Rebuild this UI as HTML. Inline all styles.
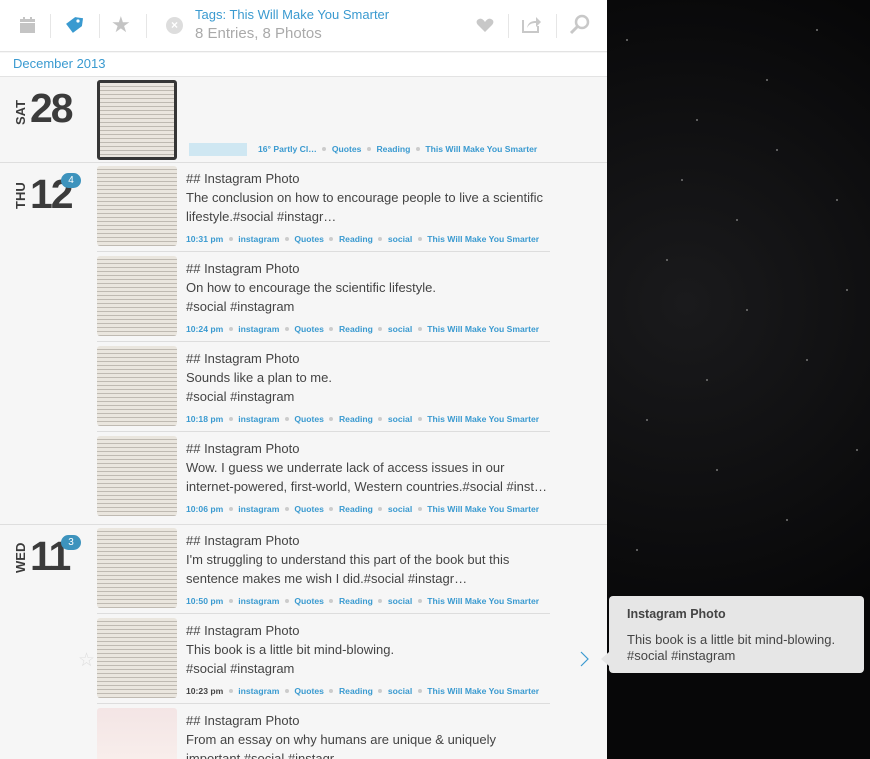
<!DOCTYPE html>
<html><head><meta charset="utf-8"><style>
*{margin:0;padding:0;box-sizing:border-box}
body{width:870px;height:759px;overflow:hidden;font-family:"Liberation Sans",sans-serif;background:#0b0b0d;position:relative}
#left{position:absolute;left:0;top:0;width:607px;height:759px;background:#f6f6f6;overflow:hidden}
#bar{position:absolute;left:0;top:0;width:607px;height:52px;background:#fff;border-bottom:1px solid #e3e3e3}
.sep{position:absolute;top:14px;width:1px;height:24px;background:#e6e6e6}
#mon{position:absolute;top:53px;left:0;width:607px;height:24px;background:#fff;border-bottom:1px solid #e3e3e3;color:#3a9ad0;font-size:13px;padding:3px 13px}
.sec{position:absolute;left:0;width:607px;border-bottom:1px solid #dedede}
.dn{position:absolute;font-size:41px;font-weight:bold;color:#3b3b3b;letter-spacing:-2px}
.dw{position:absolute;font-size:13px;font-weight:bold;color:#3b3b3b;transform:rotate(-90deg);transform-origin:left top}
.badge{position:absolute;width:20px;height:15px;border-radius:8px;background:#3d93bd;color:#fff;font-size:10px;text-align:center;line-height:15px}
.th{position:absolute;left:97px;width:80px;height:80px;border-radius:3px;background:repeating-linear-gradient(#e9e4dc 0 3px,#b9b3aa 3px 4px);opacity:.9}
.e{position:absolute;left:186px;font-size:13px;color:#444;line-height:19px}
.m{position:absolute;left:186px;font-size:8.6px;color:#3a9ad0;font-weight:bold;white-space:nowrap}
.m i{display:inline-block;width:4px;height:4px;border-radius:2px;background:#ccc;margin:0 5.5px 1px;vertical-align:middle;font-style:normal}
.ln{position:absolute;left:97px;width:453px;height:1px;background:#ddd}
</style></head><body>
<div id="left">
<div id="bar">
<svg style="position:absolute;left:20px;top:17px" width="15" height="16"><rect x="0" y="2" width="15" height="14" fill="#c4c4c4"/><rect x="3" y="0" width="2" height="4" fill="#c4c4c4"/><rect x="10" y="0" width="2" height="4" fill="#c4c4c4"/><rect x="0" y="5" width="15" height="1" fill="#fff"/></svg>
<div class="sep" style="left:50px"></div>
<svg style="position:absolute;left:64px;top:15px" width="20" height="20"><path d="M2 10 L10 2 L18 2 L18 10 L10 18 Z" fill="#3a9ad0" transform="rotate(8 10 10)"/><circle cx="14" cy="6" r="1.6" fill="#fff"/></svg>
<div class="sep" style="left:99px"></div>
<div style="position:absolute;left:111px;top:12px;font-size:22px;color:#c4c4c4">★</div>
<div class="sep" style="left:146px"></div>
<div style="position:absolute;left:166px;top:17px;width:17px;height:17px;border-radius:50%;background:#ddd;color:#fff;font-size:12px;text-align:center;line-height:17px;font-weight:bold">×</div>
<div style="position:absolute;left:195px;top:7px;font-size:13px;color:#3a9ad0">Tags: This Will Make You Smarter</div>
<div style="position:absolute;left:195px;top:25px;font-size:15px;color:#aaa">8 Entries, 8 Photos</div>
<svg style="position:absolute;left:476px;top:18px" width="18" height="15"><path d="M9 14 L2 7 C0 5 0 2 3 1 C5 0 7 1 9 4 C11 1 13 0 15 1 C18 2 18 5 16 7 Z" fill="#c8c8c8"/></svg>
<div class="sep" style="left:508px"></div>
<svg style="position:absolute;left:522px;top:15px" width="20" height="18"><path d="M1 5 V17 H16 V11" stroke="#c8c8c8" stroke-width="2" fill="none"/><path d="M5 13 C6 7 10 6 14 6 V2 L19 7 L14 12 V8 C10 8 7 9 5 13Z" fill="#c8c8c8"/></svg>
<div class="sep" style="left:556px"></div>
<svg style="position:absolute;left:569px;top:14px" width="22" height="22"><circle cx="13" cy="8" r="6" stroke="#c8c8c8" stroke-width="2.5" fill="none"/><path d="M9 12 L2 19" stroke="#c8c8c8" stroke-width="3"/></svg>
</div>
<div id="mon">December 2013</div>

<div class="sec" style="top:77px;height:86px">
<div class="dw" style="left:13px;top:48px">SAT</div><div class="dn" style="left:30px;top:8px">28</div>
<div class="th" style="top:3px;border:3px solid #222"></div>
<div style="position:absolute;left:189px;top:66px;width:58px;height:13px;background:#cfe7f2"></div>
<div class="m" style="left:258px;top:67px">16° Partly Cl…<i></i>Quotes<i></i>Reading<i></i>This Will Make You Smarter</div>
</div>

<div class="sec" style="top:163px;height:362px">
<div class="dw" style="left:13px;top:46px">THU</div><div class="dn" style="left:30px;top:8px">12</div>
<div class="badge" style="left:61px;top:10px">4</div>
<div class="th" style="top:3px"></div>
<div class="e" style="top:6px">## Instagram Photo<br>The conclusion on how to encourage people to live a scientific<br>lifestyle.#social #instagr…</div>
<div class="m" style="top:71px">10:31 pm<i></i>instagram<i></i>Quotes<i></i>Reading<i></i>social<i></i>This Will Make You Smarter</div>
<div class="ln" style="top:88px"></div>
<div class="th" style="top:93px"></div>
<div class="e" style="top:96px">## Instagram Photo<br>On how to encourage the scientific lifestyle.<br>#social #instagram</div>
<div class="m" style="top:161px">10:24 pm<i></i>instagram<i></i>Quotes<i></i>Reading<i></i>social<i></i>This Will Make You Smarter</div>
<div class="ln" style="top:178px"></div>
<div class="th" style="top:183px"></div>
<div class="e" style="top:186px">## Instagram Photo<br>Sounds like a plan to me.<br>#social #instagram</div>
<div class="m" style="top:251px">10:18 pm<i></i>instagram<i></i>Quotes<i></i>Reading<i></i>social<i></i>This Will Make You Smarter</div>
<div class="ln" style="top:268px"></div>
<div class="th" style="top:273px"></div>
<div class="e" style="top:276px">## Instagram Photo<br>Wow. I guess we underrate lack of access issues in our<br>internet-powered, first-world, Western countries.#social #inst…</div>
<div class="m" style="top:341px">10:06 pm<i></i>instagram<i></i>Quotes<i></i>Reading<i></i>social<i></i>This Will Make You Smarter</div>
</div>

<div class="sec" style="top:525px;height:240px;border:0">
<div class="dw" style="left:13px;top:48px">WED</div><div class="dn" style="left:30px;top:8px">11</div>
<div class="badge" style="left:61px;top:10px">3</div>
<div class="th" style="top:3px"></div>
<div class="e" style="top:6px">## Instagram Photo<br>I'm struggling to understand this part of the book but this<br>sentence makes me wish I did.#social #instagr…</div>
<div class="m" style="top:71px">10:50 pm<i></i>instagram<i></i>Quotes<i></i>Reading<i></i>social<i></i>This Will Make You Smarter</div>
<div class="ln" style="top:88px"></div>
<div class="th" style="top:93px"></div>
<div style="position:absolute;left:78px;top:124px;font-size:19px;color:#ddd">☆</div>
<div class="e" style="top:96px">## Instagram Photo<br>This book is a little bit mind-blowing.<br>#social #instagram</div>
<div class="m" style="top:161px"><span style="color:#444">10:23 pm</span><i></i>instagram<i></i>Quotes<i></i>Reading<i></i>social<i></i>This Will Make You Smarter</div>
<svg style="position:absolute;left:579px;top:125px" width="12" height="18"><path d="M2 2 L9 9 L2 16" stroke="#3a9ad0" stroke-width="1.2" fill="none"/></svg>
<div class="ln" style="top:178px"></div>
<div class="th" style="top:183px;background:linear-gradient(#f3e3e3,#fbf2ee)"></div>
<div class="e" style="top:186px">## Instagram Photo<br>From an essay on why humans are unique &amp; uniquely<br>important #social #instagr…</div>
</div>
</div>

<div style="position:absolute;left:607px;top:0;width:263px;height:759px;background:radial-gradient(circle at 30% 40%,#1a1a1c,#070708 70%)"></div>
<svg style="position:absolute;left:607px;top:0" width="263" height="590">
<g fill="#777">
<circle cx="20" cy="40" r="1"/><circle cx="90" cy="120" r="1"/><circle cx="160" cy="80" r="1"/><circle cx="230" cy="200" r="1"/><circle cx="60" cy="260" r="1"/><circle cx="140" cy="310" r="1"/><circle cx="200" cy="360" r="1"/><circle cx="40" cy="420" r="1"/><circle cx="110" cy="470" r="1"/><circle cx="180" cy="520" r="1"/><circle cx="250" cy="450" r="1"/><circle cx="75" cy="180" r="1"/><circle cx="210" cy="30" r="1"/><circle cx="130" cy="220" r="1"/><circle cx="30" cy="550" r="1"/><circle cx="240" cy="290" r="1"/><circle cx="170" cy="150" r="1"/><circle cx="100" cy="380" r="1"/></g></svg>
<div style="position:absolute;left:609px;top:596px;width:255px;height:77px;background:#e6e6e6;border-radius:4px;padding:10px 18px;color:#444;font-size:13px;line-height:16px">
<div style="font-weight:bold;margin-bottom:10px;font-size:12.5px">Instagram Photo</div>
This book is a little bit mind-blowing.<br>#social #instagram</div>
<div style="position:absolute;left:601px;top:652px;width:0;height:0;border-top:7px solid transparent;border-bottom:7px solid transparent;border-right:8px solid #e6e6e6"></div>
</body></html>
